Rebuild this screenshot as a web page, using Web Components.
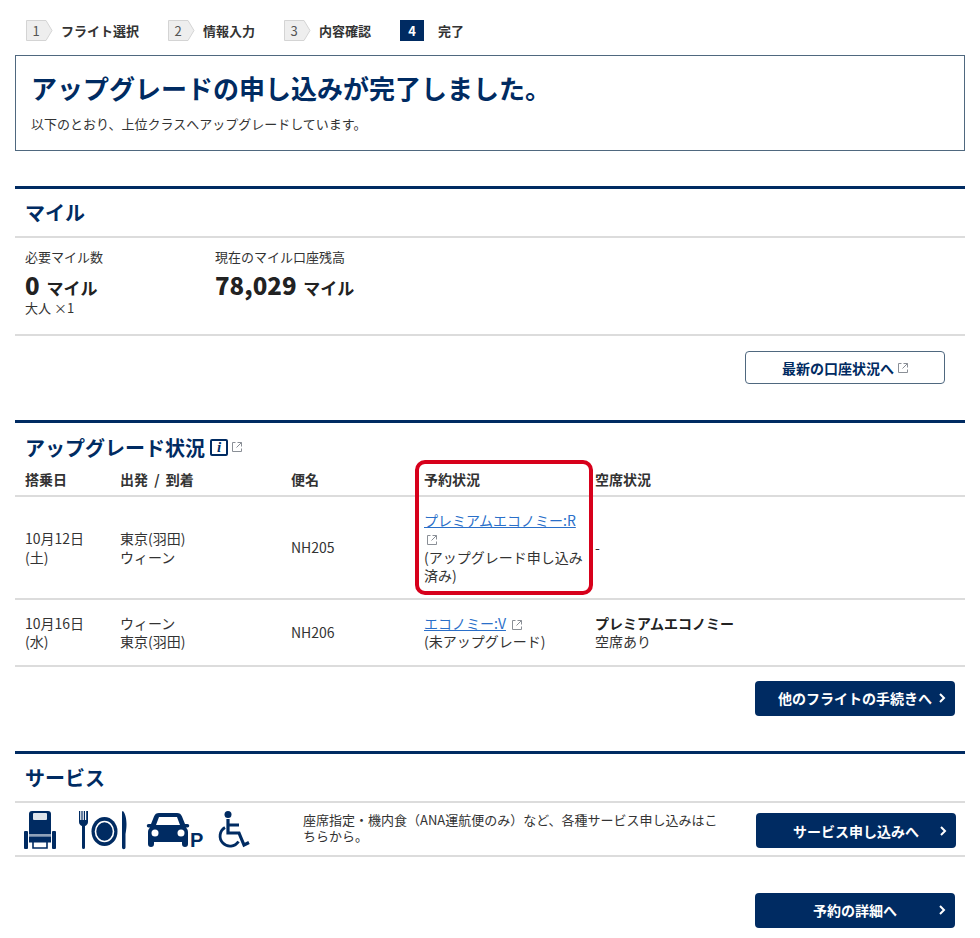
<!DOCTYPE html>
<html lang="ja">
<head>
<meta charset="utf-8">
<title>アップグレード完了</title>
<style>
  html, body { margin: 0; background: #fff; }
  body {
    font-family: "Noto Sans CJK JP", "Noto Sans", sans-serif;
    font-size: 14px;
    color: #333;
    --navy: #002b62;
    --line: #dcdcdc;
  }
</style>
</head>
<body>
<ana-page>
  <step-bar>
    <step-item num="1">フライト選択</step-item>
    <step-item num="2">情報入力</step-item>
    <step-item num="3">内容確認</step-item>
    <step-item num="4" current>完了</step-item>
  </step-bar>

  <complete-box>
    <span slot="title">アップグレードの申し込みが完了しました。</span>
    以下のとおり、上位クラスへアップグレードしています。
  </complete-box>

  <section-block heading="マイル" style="margin-top:35px">
    <mile-summary></mile-summary>
    <button-row pad="15px 20px 1px 0">
      <ana-button outline ext>最新の口座状況へ</ana-button>
    </button-row>
  </section-block>

  <section-block heading="アップグレード状況" info flush style="margin-top:35px">
    <flight-table>
      <flight-row>
        <span slot="date">10月12日<br>(土)</span>
        <span slot="route">東京(羽田)<br>ウィーン</span>
        <span slot="num">NH205</span>
        <span slot="status"><ext-link>プレミアムエコノミー:R</ext-link><br>(アップグレード申し込み済み)</span>
        <span slot="seat">-</span>
      </flight-row>
      <flight-row>
        <span slot="date">10月16日<br>(水)</span>
        <span slot="route">ウィーン<br>東京(羽田)</span>
        <span slot="num">NH206</span>
        <span slot="status"><ext-link>エコノミー:V</ext-link><br>(未アップグレード)</span>
        <span slot="seat"><b style="color:#222">プレミアムエコノミー</b><br>空席あり</span>
      </flight-row>
    </flight-table>
    <button-row pad="14px 10px 0 0">
      <ana-button>他のフライトの手続きへ</ana-button>
    </button-row>
  </section-block>

  <section-block heading="サービス" style="margin-top:35px">
    <service-row>座席指定・機内食（ANA運航便のみ）など、各種サービス申し込みはこちらから。</service-row>
    <button-row pad="36px 10px 0 0">
      <ana-button>予約の詳細へ</ana-button>
    </button-row>
  </section-block>
</ana-page>

<script>
const EXT_ICON = `<svg class="ext" width="10" height="10" viewBox="0 0 10 10" fill="none" stroke="#8a8f96" stroke-width="1">
  <path d="M3.5 .5H.5v9h9V6.5"/><path d="M5.5 .5h4v4M9.5 .5L4.5 5.5"/></svg>`;

class AnaPage extends HTMLElement {
  constructor() {
    super();
    this.attachShadow({ mode: 'open' });
    this.shadowRoot.innerHTML = `
      <style>
        :host { display: block; padding: 0 15px; height: 938px; box-sizing: border-box; overflow: hidden; }
      </style>
      <slot></slot>
    `;
  }
}
customElements.define('ana-page', AnaPage);

class StepBar extends HTMLElement {
  constructor() {
    super();
    this.attachShadow({ mode: 'open' });
    this.shadowRoot.innerHTML = `
      <style>
        :host { display: flex; gap: 29px; padding: 20px 0 0 11px; height: 55px; box-sizing: border-box; }
      </style>
      <slot></slot>
    `;
  }
}
customElements.define('step-bar', StepBar);

class StepItem extends HTMLElement {
  constructor() {
    super();
    this.attachShadow({ mode: 'open' });
    const current = this.hasAttribute('current');
    const badge = current
      ? `<span class="num on">${this.getAttribute('num')}</span>`
      : `<span class="badge">
           <svg width="27" height="21" viewBox="0 0 27 21"><path d="M.5 .5H20L26 10.5 20 20.5H.5z" fill="#eee" stroke="#d4d4d4"/></svg>
           <span class="num">${this.getAttribute('num')}</span>
         </span>`;
    this.shadowRoot.innerHTML = `
      <style>
        :host { display: flex; align-items: center; font-size: 13px; font-weight: 700; color: #333; height: 21px; }
        .badge { display: grid; width: 27px; height: 21px; }
        .badge > * { grid-area: 1 / 1; }
        .num { font-weight: 400; font-size: 13px; line-height: 21px; width: 20px; text-align: center; color: #555; }
        .num.on { width: 24px; background: var(--navy); color: #fff; font-weight: 700; }
        .text { margin-left: 8px; }
        .num.on + .text { margin-left: 14px; }
      </style>
      ${badge}<span class="text"><slot></slot></span>
    `;
  }
}
customElements.define('step-item', StepItem);

class CompleteBox extends HTMLElement {
  constructor() {
    super();
    this.attachShadow({ mode: 'open' });
    this.shadowRoot.innerHTML = `
      <style>
        :host { display: block; height: 96px; box-sizing: border-box; border: 1px solid #4f687f; padding: 13px 15px 0; }
        h1 { margin: 0; font-size: 26px; line-height: 38px; font-weight: 700; color: var(--navy); }
        p { margin: 7px 0 0; font-size: 13px; line-height: 20px; color: #333; }
      </style>
      <h1><slot name="title"></slot></h1>
      <p><slot></slot></p>
    `;
  }
}
customElements.define('complete-box', CompleteBox);

class SectionBlock extends HTMLElement {
  constructor() {
    super();
    this.attachShadow({ mode: 'open' });
    const info = this.hasAttribute('info')
      ? `<span class="info">i</span>${EXT_ICON}` : '';
    this.shadowRoot.innerHTML = `
      <style>
        :host { display: block; border-top: 3px solid var(--navy); }
        h2 {
          margin: 0; padding: 0 10px; height: 49px; box-sizing: border-box;
          display: flex; align-items: center; gap: 5px;
          font-size: 20px; font-weight: 700; color: var(--navy);
          border-bottom: 2px solid var(--line);
        }
        :host([flush]) h2 { height: 40px; border-bottom: 0; padding-top: 8px; }
        .info {
          width: 18px; height: 17px; box-sizing: border-box; border: 2px solid var(--navy); border-radius: 2px;
          font: italic 700 15px/13px "Liberation Serif", serif; text-align: center; color: var(--navy);
        }
        .ext { margin-left: -1px; }
      </style>
      <h2>${this.getAttribute('heading')}${info}</h2>
      <slot></slot>
    `;
  }
}
customElements.define('section-block', SectionBlock);

class MileSummary extends HTMLElement {
  constructor() {
    super();
    this.attachShadow({ mode: 'open' });
    this.shadowRoot.innerHTML = `
      <style>
        :host {
          display: grid; grid-template-columns: 190px 1fr; height: 98px; box-sizing: border-box;
          padding: 10px 10px 0; border-bottom: 2px solid var(--line); font-size: 13px; color: #333;
        }
        .label { line-height: 18px; }
        .val { font-weight: 700; color: #222; font-size: 17px; line-height: 24px; margin-top: 7px; }
        .val b { font-size: 24px; margin-right: 3px; }
        .val + div { line-height: 16px; }
      </style>
      <div>
        <div class="label">必要マイル数</div>
        <div class="val"><b>0</b> マイル</div>
        <div>大人 ×1</div>
      </div>
      <div>
        <div class="label">現在のマイル口座残高</div>
        <div class="val"><b>78,029</b> マイル</div>
      </div>
    `;
  }
}
customElements.define('mile-summary', MileSummary);

class ButtonRow extends HTMLElement {
  constructor() {
    super();
    this.attachShadow({ mode: 'open' });
    this.shadowRoot.innerHTML = `
      <style>
        :host { display: flex; justify-content: flex-end; padding: ${this.getAttribute('pad')}; }
      </style>
      <slot></slot>
    `;
  }
}
customElements.define('button-row', ButtonRow);

class AnaButton extends HTMLElement {
  constructor() {
    super();
    this.attachShadow({ mode: 'open' });
    const outline = this.hasAttribute('outline');
    const inner = outline
      ? `<span class="mid"><slot></slot>${EXT_ICON}</span>`
      : `<span></span><span class="mid"><slot></slot></span>
         <svg class="chev" width="7" height="10" viewBox="0 0 7 10" fill="none" stroke="#fff" stroke-width="2"><path d="M1 1l4 4-4 4"/></svg>`;
    this.shadowRoot.innerHTML = `
      <style>
        :host {
          display: grid; grid-template-columns: 1fr auto 1fr; align-items: center;
          width: 200px; height: 35px; box-sizing: border-box; border-radius: 4px;
          background: var(--navy); color: #fff; font-size: 14px; font-weight: 700; cursor: pointer;
        }
        :host([outline]) {
          display: flex; justify-content: center; height: 33px;
          background: #fff; color: var(--navy); border: 1.5px solid #4f687f;
        }
        .mid { display: flex; align-items: center; gap: 4px; }
        .chev { justify-self: end; margin-right: 9px; }
      </style>
      ${inner}
    `;
  }
}
customElements.define('ana-button', AnaButton);

class ExtLink extends HTMLElement {
  constructor() {
    super();
    this.attachShadow({ mode: 'open' });
    this.shadowRoot.innerHTML = `
      <style>
        :host { display: inline; }
        a { color: #2a6fc9; text-decoration: underline; }
        svg { margin-left: 3px; vertical-align: -1px; }
      </style>
      <a href="#"><slot></slot></a> ${EXT_ICON}
    `;
  }
}
customElements.define('ext-link', ExtLink);

const FLIGHT_COLS = '95px 171px 133px 171px 1fr';

class FlightTable extends HTMLElement {
  constructor() {
    super();
    this.attachShadow({ mode: 'open' });
    this.shadowRoot.innerHTML = `
      <style>
        :host { display: block; position: relative; }
        .head {
          display: grid; grid-template-columns: ${FLIGHT_COLS}; padding-left: 10px; height: 34px; align-items: center;
          font-weight: 700; font-size: 14px; color: #333; border-bottom: 2px solid var(--line); box-sizing: border-box;
        }
        .route { word-spacing: 3px; }
        .mark {
          position: absolute; left: 400px; top: -3px; width: 178px; height: 135px; box-sizing: border-box;
          border: 4px solid #d7001b; border-radius: 10px; pointer-events: none;
        }
      </style>
      <div class="head"><span>搭乗日</span><span class="route">出発 / 到着</span><span>便名</span><span>予約状況</span><span>空席状況</span></div>
      <slot></slot>
      <div class="mark"></div>
    `;
  }
}
customElements.define('flight-table', FlightTable);

class FlightRow extends HTMLElement {
  constructor() {
    super();
    this.attachShadow({ mode: 'open' });
    this.shadowRoot.innerHTML = `
      <style>
        :host {
          display: grid; grid-template-columns: ${FLIGHT_COLS}; align-items: center;
          padding: 14px 0 14px 10px; border-bottom: 2px solid var(--line); line-height: 18.3px; font-size: 14px; color: #333;
        }
        div { padding-right: 10px; }
      </style>
      <div><slot name="date"></slot></div>
      <div><slot name="route"></slot></div>
      <div><slot name="num"></slot></div>
      <div><slot name="status"></slot></div>
      <div><slot name="seat"></slot></div>
    `;
  }
}
customElements.define('flight-row', FlightRow);

class ServiceRow extends HTMLElement {
  constructor() {
    super();
    this.attachShadow({ mode: 'open' });
    this.shadowRoot.innerHTML = `
      <style>
        :host {
          display: flex; align-items: center; height: 54px; box-sizing: border-box; padding-left: 9px;
          border-bottom: 2px solid var(--line); font-size: 13px; line-height: 16px; color: #333;
        }
        .icons { display: flex; align-items: flex-start; width: 279px; height: 38px; margin-top: 2px; }
        svg { display: block; fill: var(--navy); overflow: visible; }
        .seat { margin-right: 23px; }
        .meal { margin-right: 21px; }
        .car { margin-right: 15px; }
        .text { width: 420px; margin-right: 33px; margin-top: -1px; }
        ana-button { margin-top: 4px; }
      </style>
      <div class="icons">
        <svg class="seat" width="32" height="38" viewBox="0 0 32 38">
          <path d="M8 0h16a3 3 0 0 1 3 3v20H5V3a3 3 0 0 1 3-3z"/>
          <rect x="9" y="2" width="14" height="7" rx="1" fill="#dfe5ec"/>
          <rect x="5" y="23" width="22" height="2.5" fill="#8fa2ba"/>
          <rect x="5" y="25.5" width="22" height="6"/>
          <rect x="0" y="20" width="4" height="18" rx="1"/>
          <rect x="28" y="20" width="4" height="18" rx="1"/>
          <path d="M9 31v6h14v-6" fill="none" stroke="#002b62" stroke-width="1.6"/>
        </svg>
        <svg class="meal" width="48" height="38" viewBox="0 0 48 38">
          <path d="M0 0h1.2v9h1.2V0h1.2v9h1.2V0h1.2v9h1.2V0H9v11c0 2-1.500 3.400-3 4v21.500a1.500 1.500 0 0 1-3 0V15c-1.500-.6-3-2-3-4z"/>
          <ellipse cx="25.500" cy="20.500" rx="13" ry="14.500"/>
          <ellipse cx="25.500" cy="20.500" rx="9" ry="10" fill="none" stroke="#fff" stroke-width="1.600"/>
          <path d="M44 0c2 2 3.500 7 3.500 13s-1 9-1 11v12.500a1.700 1.700 0 0 1-3.500 0V1.500c0-1 .5-1.500 1-1.500z"/>
        </svg>
        <svg class="car" width="55" height="38" viewBox="0 0 55 38">
          <path d="M11 2h18c2.500 0 4 1 5 3.500L37 13h2.500a1 1 0 0 1 0 3.500H38c1.500 1.500 2 3 2 5V33a3 3 0 0 1-6 0v-2H6v2a3 3 0 0 1-6 0V21.500c0-2 .5-3.500 2-5H.5a1 1 0 0 1 0-3.500H3l3-7.500C7 3 8.500 2 11 2z"/>
          <path d="M11 6h18l3 8H8z" fill="#fff"/>
          <circle cx="7" cy="22" r="3.500" fill="#fff"/>
          <circle cx="33" cy="22" r="3.500" fill="#fff"/>
          <text x="42" y="36" font-family="Liberation Sans, sans-serif" font-size="20" font-weight="700" fill="#002b62">P</text>
        </svg>
        <svg width="32" height="38" viewBox="0 0 32 38" style="fill:none">
          <circle cx="10" cy="3.500" r="3.500" fill="#002b62"/>
          <path d="M10 8v14h11l5 12 5-2.500M10 14h11" stroke="#002b62" stroke-width="3.200" fill="none"/>
          <path d="M7 16.500a10 10 0 1 0 13.500 14" stroke="#002b62" stroke-width="2.800" fill="none"/>
        </svg>
      </div>
      <div class="text"><slot></slot></div>
      <ana-button>サービス申し込みへ</ana-button>
    `;
  }
}
customElements.define('service-row', ServiceRow);
</script>
</body>
</html>
